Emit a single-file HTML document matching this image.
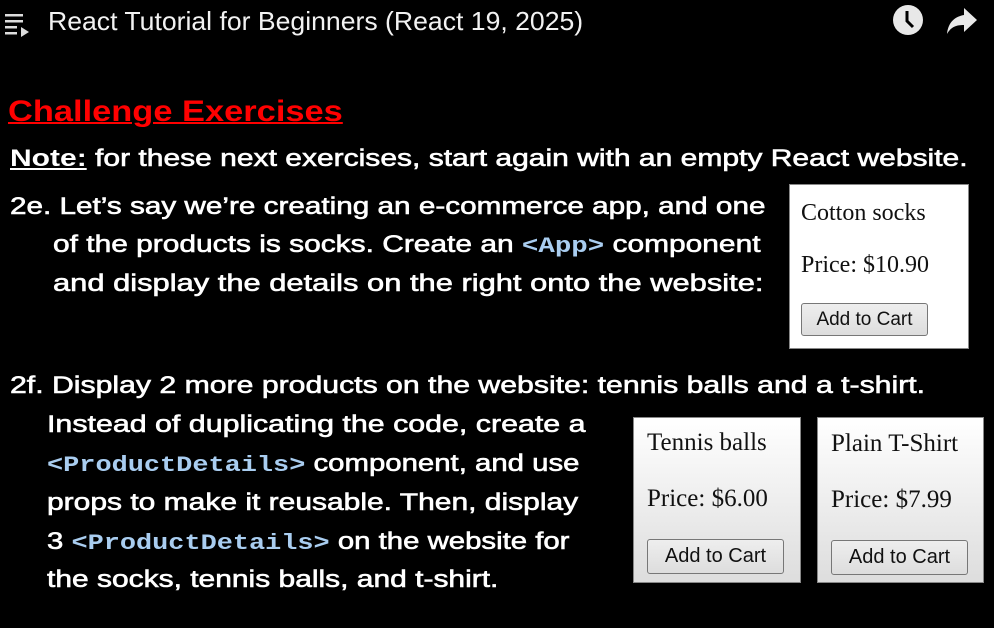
<!DOCTYPE html>
<html><head><meta charset="utf-8"><style>
html,body{margin:0;padding:0;background:#000;width:994px;height:628px;overflow:hidden;position:relative}
.ln{position:absolute;white-space:nowrap;height:30px;line-height:30px;font-family:"Liberation Sans",sans-serif;font-weight:normal;-webkit-text-stroke:0.6px #fff;font-size:24px;color:#fff;transform-origin:0 50%;top:1px}
.c{font-family:"Liberation Mono",monospace;font-weight:bold;color:#a9cdf0;-webkit-text-stroke:0;font-size:22px}
.card{position:absolute;border:1px solid #888;box-sizing:border-box;font-family:"Liberation Serif",serif;color:#111}
.card div{position:absolute;white-space:nowrap;font-size:24px;line-height:26px}
.card .btn{position:absolute;border:1px solid #777;border-radius:3px;background:linear-gradient(#eee,#ddd);font-family:"Liberation Sans",sans-serif;font-size:19px;text-align:center;box-sizing:border-box;color:#111}
</style></head><body>
<svg style="position:absolute;left:4px;top:10px" width="30" height="28" viewBox="0 0 30 28"><rect x="1" y="4" width="18" height="2.5" fill="#ddd"/><rect x="1" y="10" width="18" height="2.5" fill="#ddd"/><rect x="1" y="16" width="12" height="2.5" fill="#ddd"/><rect x="1" y="22" width="12" height="2.5" fill="#ddd"/><path d="M17 17 L25 22 L17 27Z" fill="#ddd"/></svg>
<div class="ln" style="left:48px;top:6px;-webkit-text-stroke:0;font-family:'Liberation Sans Narrow','Liberation Sans',sans-serif;font-size:26px;color:#f2f2f2;--w:535px">React Tutorial for Beginners (React 19, 2025)</div>
<svg style="position:absolute;left:892px;top:4px" width="32" height="32" viewBox="0 0 32 32"><circle cx="16" cy="16" r="15" fill="#e8e8e8"/><path d="M15 7 V17 L21 23" stroke="#000" stroke-width="3" fill="none"/></svg>
<svg style="position:absolute;left:944px;top:6px" width="34" height="30" viewBox="0 0 34 30"><path d="M20 2 L33 14 L20 26 V19 C12 19 7 21 3 28 C4 18 9 11 20 9Z" fill="#e8e8e8"/></svg>

<div class="ln" style="left:8px;top:94px;height:36px;line-height:36px;font-size:30px;font-weight:bold;-webkit-text-stroke:0;color:#f00;text-decoration:underline;text-decoration-thickness:2px;--w:335px">Challenge Exercises</div>
<div class="ln" style="left:10px;top:144px;--w:958px"><u style="font-weight:bold;-webkit-text-stroke:0">Note:</u> for these next exercises, start again with an empty React website.</div>
<div class="ln" style="left:10px;top:192px;--w:756px">2e. Let’s say we’re creating an e-commerce app, and one</div>
<div class="ln" style="left:53px;top:230px;--w:708px">of the products is socks. Create an <span class="c">&lt;App&gt;</span> component</div>
<div class="ln" style="left:53px;top:269px;--w:710px">and display the details on the right onto the website:</div>
<div class="ln" style="left:10px;top:371px;--w:915px">2f. Display 2 more products on the website: tennis balls and a t-shirt.</div>
<div class="ln" style="left:47px;top:410px;--w:539px">Instead of duplicating the code, create a</div>
<div class="ln" style="left:47px;top:449px;--w:532px"><span class="c">&lt;ProductDetails&gt;</span> component, and use</div>
<div class="ln" style="left:47px;top:488px;--w:531px">props to make it reusable. Then, display</div>
<div class="ln" style="left:47px;top:527px;--w:522px">3 <span class="c">&lt;ProductDetails&gt;</span> on the website for</div>
<div class="ln" style="left:47px;top:565px;--w:452px">the socks, tennis balls, and t-shirt.</div>

<div class="card" style="left:789px;top:184px;width:180px;height:165px;background:#fff">
<div style="left:11px;top:15px">Cotton socks</div>
<div style="left:11px;top:67px">Price: $10.90</div>
<div class="btn" style="left:11px;top:118px;width:127px;height:33px;line-height:31px">Add to Cart</div>
</div>
<div class="card" style="left:633px;top:417px;width:168px;height:166px;background:linear-gradient(#fff,#ddd)">
<div style="left:13px;top:12px;font-size:25px">Tennis balls</div>
<div style="left:13px;top:68px;font-size:25px">Price: $6.00</div>
<div class="btn" style="left:13px;top:121px;width:137px;height:35px;line-height:33px;font-size:20px">Add to Cart</div>
</div>
<div class="card" style="left:817px;top:417px;width:167px;height:166px;background:linear-gradient(#fff,#ddd)">
<div style="left:13px;top:13px;font-size:25px">Plain T-Shirt</div>
<div style="left:13px;top:69px;font-size:25px">Price: $7.99</div>
<div class="btn" style="left:13px;top:122px;width:137px;height:35px;line-height:33px;font-size:20px">Add to Cart</div>
</div>
<script>
document.querySelectorAll('.ln').forEach(function(e){var w=parseFloat(e.style.getPropertyValue('--w'));if(!w)return;var r=e.scrollWidth;if(r>0)e.style.transform='scaleX('+(w/r)+')';});
</script>
</body></html>
